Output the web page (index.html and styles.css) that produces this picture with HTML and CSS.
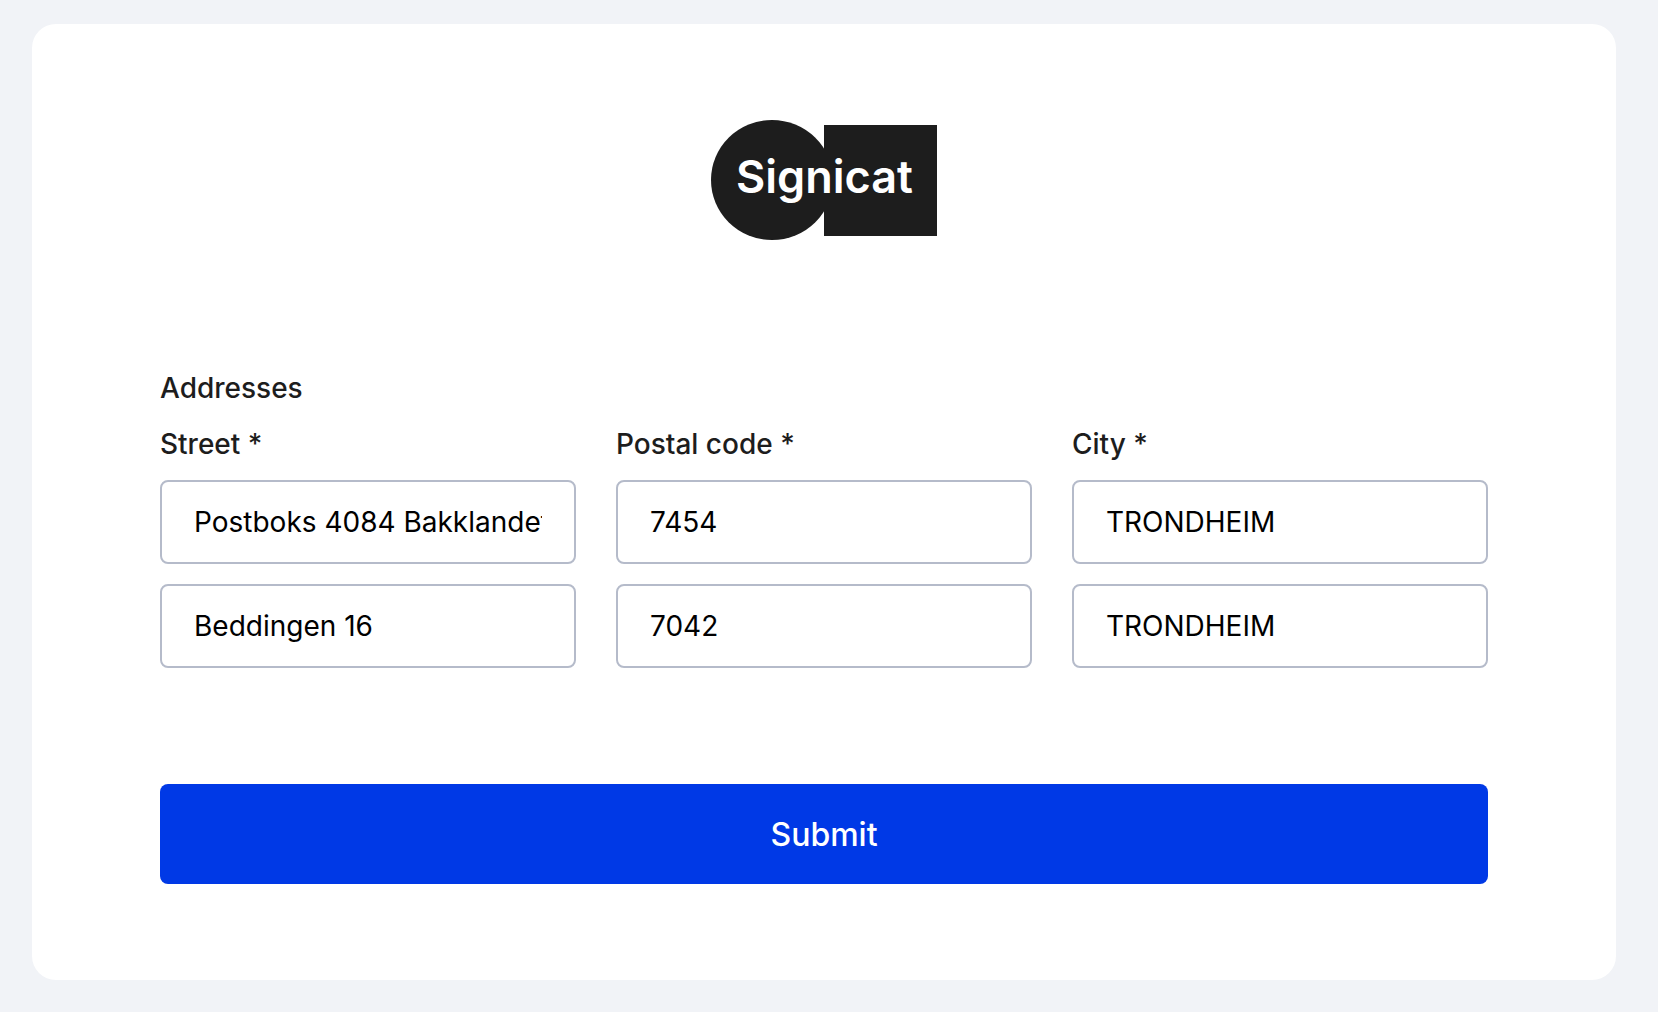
FILE: index.html
```html
<!DOCTYPE html>
<html lang="en">
<head>
    <meta charset="UTF-8">
    <meta name="viewport" content="width=device-width, initial-scale=1.0">
    <title>Signicat</title>
    <link rel="stylesheet" href="styles.css">
</head>
<body>
    <main class="card">
        <svg class="logo" viewBox="0 0 226 120" width="226" height="120" role="img" aria-label="Signicat">
            <ellipse cx="61" cy="60" rx="61" ry="60" fill="#1d1d1d"/>
            <rect x="113" y="5" width="113" height="111" fill="#1d1d1d"/>
            <text class="logo-text" x="25" y="73">Signicat</text>
        </svg>

        <form id="addressForm">
            <h2 class="form-title">Addresses</h2>

            <div class="address-grid">
                <label for="street1" id="streetLabel">Street *</label>
                <label for="postal1" id="postalLabel">Postal code *</label>
                <label for="city1" id="cityLabel">City *</label>

                <input type="text" id="street1" value="Postboks 4084 Bakklandet" required>
                <input type="text" id="postal1" value="7454" required>
                <input type="text" id="city1" value="TRONDHEIM" required>

                <!-- second address, shares the labels above -->
                <input type="text" id="street2" value="Beddingen 16" aria-labelledby="streetLabel" required>
                <input type="text" id="postal2" value="7042" aria-labelledby="postalLabel" required>
                <input type="text" id="city2" value="TRONDHEIM" aria-labelledby="cityLabel" required>
            </div>

            <button type="submit" class="submit-button">Submit</button>
        </form>
    </main>
</body>
</html>
```
FILE: styles.css
```css
* {
    box-sizing: border-box;
}
body {
    margin: 24px 42px 32px 32px;
    background-color: #f1f3f7;
    color: #1d1d1d;
    font-family: Inter, "Liberation Sans", sans-serif;
    font-size: 28px;
    line-height: 32px;
}
.card {
    padding: 96px 128px;
    border-radius: 24px;
    background-color: #fff;
}
.logo {
    display: block;
    margin: 0 auto 132px;
}
.logo-text {
    fill: #fff;
    font-size: 45px;
    font-weight: 600;
}
.form-title {
    margin: 0 0 24px;
    font-size: 28px;
    font-weight: 500;
}
.address-grid {
    display: grid;
    grid-template-columns: repeat(3, minmax(0, 1fr));
    gap: 20px 40px;
    margin-bottom: 116px;
}
label {
    font-weight: 500;
}
input {
    width: 100%;
    height: 84px;
    padding: 0 32px;
    border: 2px solid #b5bbca;
    border-radius: 8px;
    background-color: #fff;
    color: #000;
    font: inherit;
}
.submit-button {
    display: block;
    width: 100%;
    height: 100px;
    border: 0;
    border-radius: 8px;
    background-color: #0039e6;
    color: #fff;
    font-family: inherit;
    font-size: 32px;
    font-weight: 500;
}
```
